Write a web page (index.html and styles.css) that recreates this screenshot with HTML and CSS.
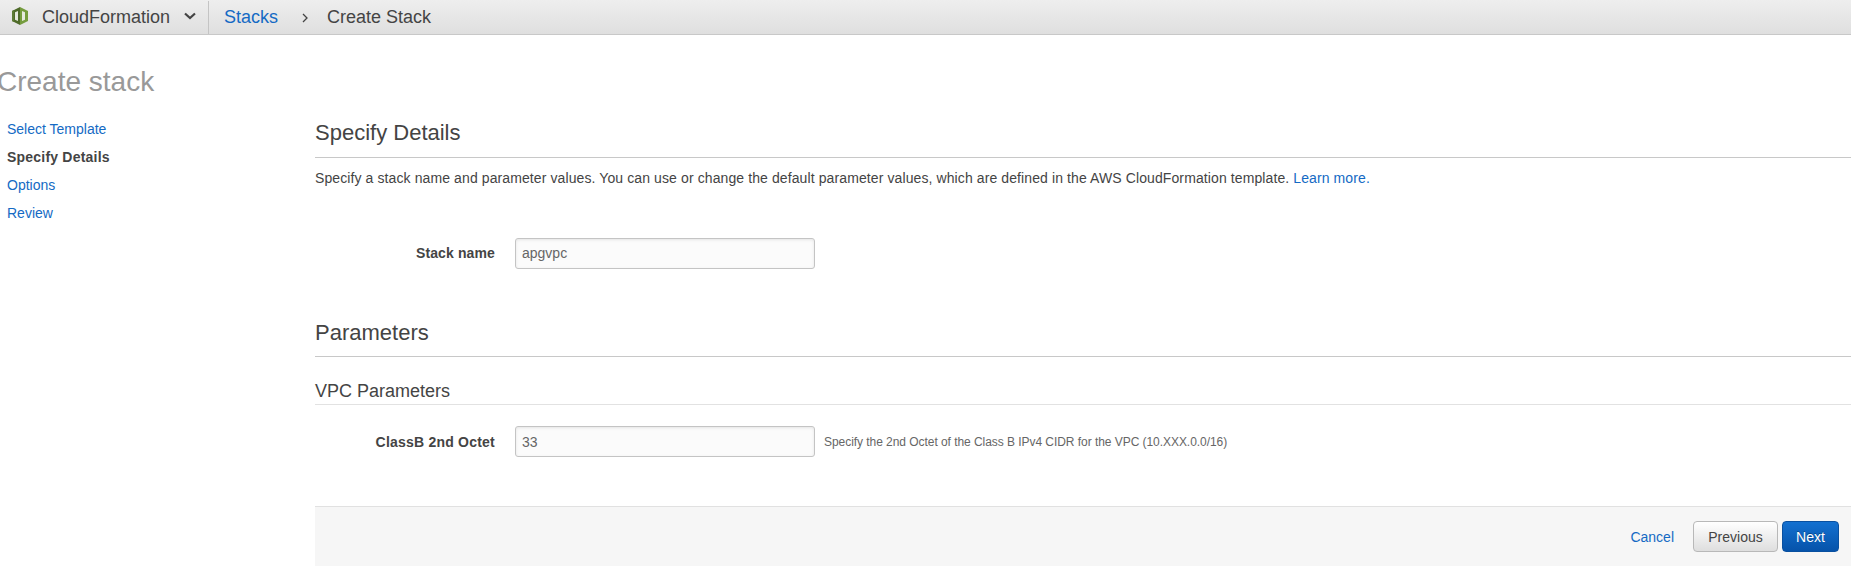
FILE: index.html
```html
<!DOCTYPE html>
<html lang="en">
<head>
<meta charset="utf-8">
<title>Create Stack</title>
<link rel="stylesheet" href="styles.css">
</head>
<body>
<header class="topbar">
  <div class="service">
    <svg class="logo" width="16" height="18" viewBox="0 0 16 18">
      <path fill="#4f6b2a" d="M8 0 2 3 0 4v10l2 1 6 3z"/>
      <path fill="#759c3e" d="M8 0l6 3 2 1v10l-2 1-6 3z"/>
      <path fill="#5d7b35" d="M2 3v12l-2-1V4z"/>
      <path fill="#e6eadf" d="M3 5.200 6 4v10l-3-1.200z"/>
      <path fill="#e6eadf" d="M10 4l3 1.200v7.600L10 14z"/>
    </svg>
    <span class="service-name">CloudFormation</span>
    <svg class="caret" width="12" height="8" viewBox="0 0 12 8"><path d="M1 1.500 6 6 11 1.500" fill="none" stroke="#444" stroke-width="2.200"/></svg>
  </div>
  <nav class="crumbs">
    <a class="link">Stacks</a>
    <svg class="sep" width="6" height="10" viewBox="0 0 6 10"><path d="M1 1l4 4-4 4" fill="none" stroke="#444" stroke-width="1.300"/></svg>
    <span>Create Stack</span>
  </nav>
</header>
<h1 class="title">Create stack</h1>
<div class="layout">
  <nav class="steps">
    <a class="link">Select Template</a>
    <b class="current">Specify Details</b>
    <a class="link">Options</a>
    <a class="link">Review</a>
  </nav>
  <main class="content">
    <h2 class="section">Specify Details</h2>
    <p class="intro">Specify a stack name and parameter values. You can use or change the default parameter values, which are defined in the AWS CloudFormation template. <a class="link">Learn more.</a></p>
    <div class="field">
      <label class="label" for="stack">Stack name</label>
      <input class="input" id="stack" value="apgvpc">
    </div>
    <h2 class="section params">Parameters</h2>
    <h3 class="group">VPC Parameters</h3>
    <div class="field octet">
      <label class="label" for="octet">ClassB 2nd Octet</label>
      <input class="input" id="octet" value="33">
      <span class="hint">Specify the 2nd Octet of the Class B IPv4 CIDR for the VPC (10.XXX.0.0/16)</span>
    </div>
    <footer class="actions">
      <a class="link cancel">Cancel</a>
      <button class="btn previous">Previous</button>
      <button class="btn next">Next</button>
    </footer>
  </main>
</div>
</body>
</html>
```
FILE: styles.css
```css
* { box-sizing: border-box; }
body {
  margin: 0;
  background: #fff;
  color: #444;
  font: 14px/20px "Liberation Sans", Arial, sans-serif;
  overflow: hidden;
}
h1, h2, h3, p { margin: 0; font-weight: normal; }
.link { color: #146ac4; text-decoration: none; }
.topbar {
  display: flex;
  height: 35px;
  font-size: 18px;
  line-height: 34px;
  background: linear-gradient(#eee, #dfdfdf);
  border-bottom: 1px solid #c8c8c8;
}
.service {
  display: flex;
  width: 209px;
  padding-left: 12px;
  margin-top: 1px;
  border-right: 1px solid #c4c4c4;
  line-height: 32px;
}
.logo { margin-top: 6px; }
.service-name { margin-left: 14px; width: 128px; }
.caret { margin: 11px 0 0 14px; }
.crumbs { display: flex; padding-left: 15px; }
.sep { margin: 13px 19px 0 24px; }
.title {
  height: 83px;
  padding-top: 27px;
  margin-left: -3px;
  font-size: 28px;
  line-height: 40px;
  color: #999;
}
.layout { display: flex; }
.steps {
  display: flex;
  flex-direction: column;
  gap: 8px;
  width: 315px;
  padding: 1px 0 0 7px;
}
.current { letter-spacing: .21px; }
.content { flex: 1; }
.section {
  height: 40px;
  padding-top: 1px;
  font-size: 22px;
  line-height: 28px;
  border-bottom: 1px solid #c8c8c8;
}
.intro { padding-top: 10px; letter-spacing: .103px; }
.field {
  display: grid;
  grid-template-columns: 180px 300px 1fr;
  column-gap: 20px;
  align-items: center;
  margin-top: 50px;
}
.label {
  font-weight: bold;
  text-align: right;
  letter-spacing: .22px;
}
.input {
  height: 31px;
  padding: 0 6px;
  font: inherit;
  color: #666;
  background: #fbfbfb;
  border: 1px solid #c4c4c4;
  border-radius: 3px;
  box-shadow: inset 0 1px 3px #e4e4e4;
}
#stack { padding-bottom: 2px; }
label[for="stack"] { padding-bottom: 1px; letter-spacing: .12px; }
.params { padding-top: 2px; margin-top: 48px; }
.group {
  height: 48px;
  padding-top: 23px;
  font-size: 18px;
  line-height: 22px;
  border-bottom: 1px solid #e2e2e2;
}
.octet { margin-top: 21px; }
.hint {
  margin-left: -11px;
  font-size: 12px;
  letter-spacing: -.05px;
  color: #666;
}
.actions {
  display: flex;
  align-items: center;
  justify-content: flex-end;
  height: 60px;
  margin-top: 49px;
  padding-right: 12px;
  background: #f6f6f6;
  border-top: 1px solid #e1e1e1;
}
.cancel { margin-right: 19px; }
.btn {
  height: 31px;
  padding: 0;
  font: inherit;
  border-radius: 4px;
}
.previous {
  width: 85px;
  margin-right: 4px;
  color: #444;
  border: 1px solid #b8b8b8;
  background: linear-gradient(#fff, #dedede);
}
.next {
  width: 57px;
  color: #fff;
  border: 1px solid #0950a0;
  background: linear-gradient(#1370d0, #0653aa);
  text-shadow: 0 -1px 0 rgba(0, 0, 0, .3);
}
```
